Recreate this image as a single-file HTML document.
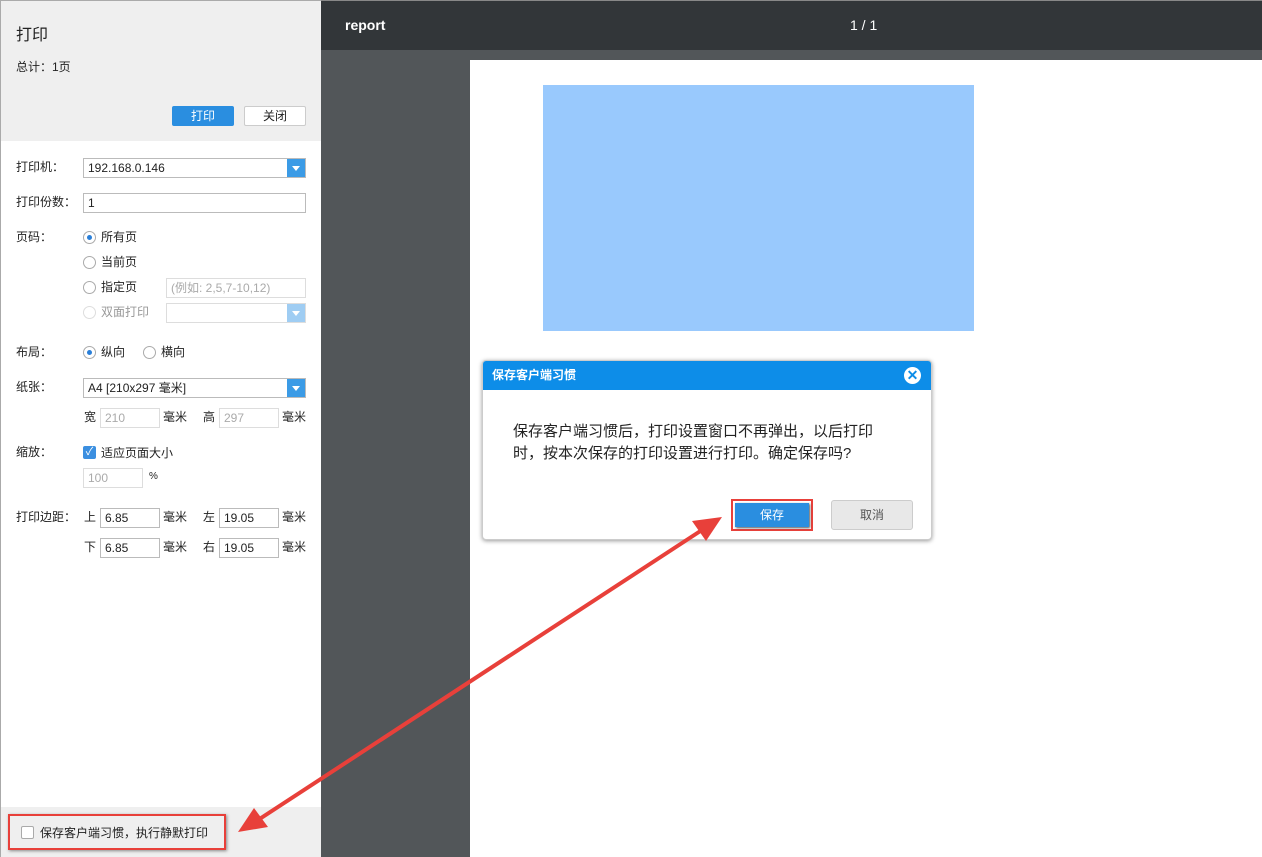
<!DOCTYPE html>
<html><head><meta charset="utf-8"><style>
*{margin:0;padding:0;box-sizing:border-box}
body{width:1262px;height:857px;position:relative;overflow:hidden;font-family:"Liberation Sans","Noto Sans CJK SC",sans-serif;font-size:12px;color:#222;background:#525659}
.a{position:absolute}
.lp{left:0;top:0;width:321px;height:857px;background:#fff;box-shadow:inset 1px 1px 0 #aaa}
.inp{position:absolute;height:20px;border:1px solid #bbb;background:#fff;padding-left:4px;line-height:18px;font-size:12px}
.dis{color:#aaa;border-color:#ddd}
.dd{position:absolute;right:0;top:0;width:18px;height:18px;background:#3b9be6}
.dd:after{content:"";position:absolute;left:5px;top:7px;border:4px solid transparent;border-top:5px solid #fff}
.rad{position:absolute;width:13px;height:13px;border:1px solid #aaa;border-radius:50%;background:#fff}
.rad.on:after{content:"";position:absolute;left:3px;top:3px;width:5px;height:5px;border-radius:50%;background:#2a7fd8}
.lbl{position:absolute;font-size:12px;line-height:14px}
</style></head><body>
<div class="a lp">
 <div class="a" style="left:1px;top:1px;width:320px;height:140px;background:#efefef"></div>
 <div class="lbl" style="left:16px;top:27px;font-size:16px;line-height:18px">打印</div>
 <div class="lbl" style="left:16px;top:60px">总计：1页</div>
 <div class="a" style="left:172px;top:106px;width:62px;height:20px;background:#2a8ee0;border-radius:2px;color:#fff;text-align:center;line-height:20px">打印</div>
 <div class="a" style="left:244px;top:106px;width:62px;height:20px;background:#fff;border:1px solid #ccc;border-radius:2px;text-align:center;line-height:18px">关闭</div>
 <div class="lbl" style="left:16px;top:160px">打印机：</div>
 <div class="inp" style="left:83px;top:158px;width:223px">192.168.0.146<div class="dd"></div></div>
 <div class="lbl" style="left:16px;top:195px">打印份数：</div>
 <div class="inp" style="left:83px;top:193px;width:223px">1</div>
 <div class="lbl" style="left:16px;top:230px">页码：</div>
 <div class="rad on" style="left:83px;top:231px"></div><div class="lbl" style="left:101px;top:230px">所有页</div>
 <div class="rad" style="left:83px;top:256px"></div><div class="lbl" style="left:101px;top:255px">当前页</div>
 <div class="rad" style="left:83px;top:281px"></div><div class="lbl" style="left:101px;top:280px">指定页</div>
 <div class="inp dis" style="left:166px;top:278px;width:140px">(例如: 2,5,7-10,12)</div>
 <div class="rad" style="left:83px;top:306px;border-color:#ddd"></div><div class="lbl" style="left:101px;top:305px;color:#999">双面打印</div>
 <div class="inp dis" style="left:166px;top:303px;width:140px"><div class="dd" style="background:#9fcdf3"></div></div>
 <div class="lbl" style="left:16px;top:345px">布局：</div>
 <div class="rad on" style="left:83px;top:346px"></div><div class="lbl" style="left:101px;top:345px">纵向</div>
 <div class="rad" style="left:143px;top:346px"></div><div class="lbl" style="left:161px;top:345px">横向</div>
 <div class="lbl" style="left:16px;top:380px">纸张：</div>
 <div class="inp" style="left:83px;top:378px;width:223px">A4 [210x297 毫米]<div class="dd"></div></div>
 <div class="lbl" style="left:84px;top:410px">宽</div><div class="inp dis" style="left:100px;top:408px;width:60px">210</div><div class="lbl" style="left:163px;top:410px">毫米</div>
 <div class="lbl" style="left:203px;top:410px">高</div><div class="inp dis" style="left:219px;top:408px;width:60px">297</div><div class="lbl" style="left:282px;top:410px">毫米</div>
 <div class="lbl" style="left:16px;top:445px">缩放：</div>
 <div class="a" style="left:83px;top:446px;width:13px;height:13px;background:#3b8fe0;border-radius:2px;color:#fff;font-size:11px;line-height:13px;text-align:center">✓</div>
 <div class="lbl" style="left:101px;top:446px">适应页面大小</div>
 <div class="inp dis" style="left:83px;top:468px;width:60px">100</div><div class="lbl" style="left:149px;top:470px;font-size:10px">%</div>
 <div class="lbl" style="left:16px;top:510px">打印边距：</div>
 <div class="lbl" style="left:84px;top:510px">上</div><div class="inp" style="left:100px;top:508px;width:60px">6.85</div><div class="lbl" style="left:163px;top:510px">毫米</div>
 <div class="lbl" style="left:203px;top:510px">左</div><div class="inp" style="left:219px;top:508px;width:60px">19.05</div><div class="lbl" style="left:282px;top:510px">毫米</div>
 <div class="lbl" style="left:84px;top:540px">下</div><div class="inp" style="left:100px;top:538px;width:60px">6.85</div><div class="lbl" style="left:163px;top:540px">毫米</div>
 <div class="lbl" style="left:203px;top:540px">右</div><div class="inp" style="left:219px;top:538px;width:60px">19.05</div><div class="lbl" style="left:282px;top:540px">毫米</div>
 <div class="a" style="left:1px;top:807px;width:320px;height:50px;background:#efefef"></div>
 <div class="a" style="left:8px;top:814px;width:218px;height:36px;border:2px solid #e8403a;box-shadow:1px 1px 3px #888"></div>
 <div class="a" style="left:21px;top:826px;width:13px;height:13px;border:1px solid #aaa;border-radius:2px;background:#fff"></div>
 <div class="lbl" style="left:40px;top:826px">保存客户端习惯，执行静默打印</div>
</div>
<div class="a" style="left:321px;top:0;width:941px;height:50px;background:#323639;border-top:1px solid #888"></div>
<div class="a" style="left:345px;top:17px;color:#fff;font-weight:bold;font-size:14px">report</div>
<div class="a" style="left:850px;top:17px;color:#fff;font-size:14px">1 / 1</div>
<div class="a" style="left:470px;top:60px;width:792px;height:797px;background:#fff"></div>
<div class="a" style="left:543px;top:85px;width:431px;height:246px;background:#99c9fd"></div>
<div class="a" style="left:482px;top:360px;width:450px;height:180px;background:#fff;border:1px solid #ccc;border-radius:4px;box-shadow:0 1px 4px #999;overflow:hidden">
 <div style="height:29px;background:#0d8de8;color:#fff;font-weight:bold;font-size:12px;line-height:29px;padding-left:9px">保存客户端习惯</div>
 <div class="a" style="left:421px;top:6px;width:17px;height:17px;border-radius:50%;background:#fff;color:#0d8de8;font-weight:bold;text-align:center;line-height:17px;font-size:14px">✕</div>
 <div class="a" style="left:30px;top:60px;font-size:15px;line-height:22px;width:388px">保存客户端习惯后，打印设置窗口不再弹出，以后打印时，按本次保存的打印设置进行打印。确定保存吗?</div>
 <div class="a" style="left:248px;top:138px;width:82px;height:32px;border:2px solid #e8403a"></div>
 <div class="a" style="left:252px;top:142px;width:74px;height:24px;background:#2a8ee0;color:#fff;text-align:center;line-height:24px;box-shadow:1px 1px 2px #555">保存</div>
 <div class="a" style="left:348px;top:139px;width:82px;height:30px;background:#e8e8e8;border:1px solid #ccc;border-radius:3px;text-align:center;line-height:28px;color:#555">取消</div>
</div>
<svg class="a" style="left:0;top:0" width="1262" height="857">
 <line x1="705" y1="528" x2="255" y2="822" stroke="#e8403a" stroke-width="4"/>
 <polygon points="722,517 692,521 706,541" fill="#e8403a"/>
 <polygon points="238,832 268,827 254,808" fill="#e8403a"/>
</svg>
</body></html>
